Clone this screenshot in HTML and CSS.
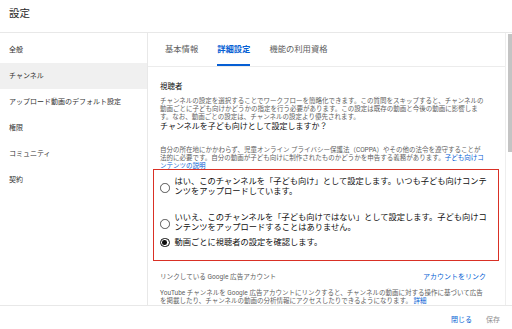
FILE: index.html
```html
<!DOCTYPE html>
<html lang="ja">
<head>
<meta charset="utf-8">
<title>設定</title>
<link rel="stylesheet" href="styles.css">
</head>
<body>
<div class="app">
  <header class="header">設定</header>
  <div class="body">
    <nav class="sidebar">
      <div class="nav-item">全般</div>
      <div class="nav-item active">チャンネル</div>
      <div class="nav-item">アップロード動画のデフォルト設定</div>
      <div class="nav-item">権限</div>
      <div class="nav-item">コミュニティ</div>
      <div class="nav-item">契約</div>
    </nav>
    <main class="main">
      <div class="panel">
        <div class="tabs">
          <div class="tab">基本情報</div>
          <div class="tab selected">詳細設定</div>
          <div class="tab">機能の利用資格</div>
        </div>
        <div class="content">
          <h2 class="section-title">視聴者</h2>
          <p class="desc">チャンネルの設定を選択することでワークフローを簡略化できます。この質問をスキップすると、チャンネルの動画ごとに子ども向けかどうかの指定を行う必要があります。この設定は既存の動画と今後の動画に影響します。なお、動画ごとの設定は、チャンネルの設定より優先されます。</p>
          <h3 class="question">チャンネルを子ども向けとして設定しますか？</h3>
          <p class="desc coppa">自分の所在地にかかわらず、児童オンライン プライバシー保護法（COPPA）やその他の法令を遵守することが法的に必要です。自分の動画が子ども向けに制作されたものかどうかを申告する義務があります。<span class="link">子ども向けコンテンツの説明</span></p>
          <div class="options">
            <div class="option opt1">
              <span class="radio"></span>
              <span class="option-text">はい、このチャンネルを「子ども向け」として設定します。いつも子ども向けコンテンツをアップロードしています。</span>
            </div>
            <div class="option opt2">
              <span class="radio"></span>
              <span class="option-text">いいえ、このチャンネルを「子ども向けではない」として設定します。子ども向けコンテンツをアップロードすることはありません。</span>
            </div>
            <div class="option opt3">
              <span class="radio checked"></span>
              <span class="option-text">動画ごとに視聴者の設定を確認します。</span>
            </div>
          </div>
          <div class="link-row">
            <span class="link-label">リンクしている Google 広告アカウント</span>
            <span class="link-action">アカウントをリンク</span>
          </div>
          <p class="desc yt">YouTube チャンネルを Google 広告アカウントにリンクすると、チャンネルの動画に対する操作に基づいて広告を掲載したり、チャンネルの動画の分析情報にアクセスしたりできるようになります。 <span class="link">詳細</span></p>
        </div>
      </div>
      <div class="scrollbar"><div class="thumb"></div></div>
    </main>
  </div>
  <footer class="footer">
    <span class="btn close">閉じる</span>
    <span class="btn save">保存</span>
  </footer>
</div>
</body>
</html>
```
FILE: styles.css
```css
* { box-sizing: border-box; }
html, body { margin: 0; padding: 0; background: #fff; }
body {
  font-family: Roboto, "Noto Sans CJK JP", sans-serif;
  color: #0f0f0f;
  width: 512px;
  height: 329px;
  overflow: hidden;
}
.app { display: flex; flex-direction: column; height: 329px; }
.header {
  height: 33px;
  border-bottom: 1px solid #e8e8e8;
  padding: 6px 0 0 9px;
  font-size: 10.5px;
  line-height: 16px;
  color: #282828;
}
.body { display: flex; height: 272px; }
.sidebar {
  width: 148px;
  border-right: 1px solid #e8e8e8;
  padding-top: 4px;
  flex: none;
}
.nav-item {
  height: 26px;
  line-height: 26px;
  padding-left: 9px;
  font-size: 7px;
  color: #333;
}
.nav-item.active { background: #f0f0f0; }
.main { flex: 1; display: flex; min-width: 0; }
.panel { flex: 1; display: flex; flex-direction: column; min-width: 0; }
.tabs {
  height: 34px;
  border-bottom: 1px solid #ececec;
  display: flex;
  gap: 19px;
  padding-left: 17px;
  flex: none;
}
.tab {
  font-size: 8.3px;
  line-height: 33px;
  color: #606060;
  position: relative;
}
.tab.selected { color: #065fd4; font-weight: 700; }
.tab.selected::after {
  content: "";
  position: absolute;
  left: 0; right: 0; bottom: 0;
  height: 2px;
  background: #065fd4;
}
.content {
  flex: 1;
  overflow: hidden;
  padding: 15px 17px 0 12px;
}
.section-title {
  margin: 0;
  font-size: 7.5px;
  line-height: 10px;
  font-weight: 400;
  color: #0f0f0f;
}
.desc {
  margin: 5px 0 0;
  font-size: 6.5px;
  line-height: 8px;
  color: #606060;
}
.question {
  margin: 0;
  font-size: 8px;
  line-height: 12px;
  font-weight: 400;
  color: #0f0f0f;
}
.desc.coppa { margin-top: 13px; max-width: 326.5px; }
.link { color: #065fd4; }
.options {
  position: relative;
  background: #fff;
  margin: -1.2px -11px 0 -7px;
  border: 1.5px solid #d93025;
  padding: 6.5px 0 12.5px 6px;
}
.option { display: flex; align-items: center; }
.opt1 { margin-bottom: 16px; }
.opt2 { margin-bottom: 5px; }
.radio {
  flex: none;
  width: 9.5px;
  height: 9.5px;
  border: 1.2px solid #555;
  border-radius: 50%;
  margin-top: 3px;
  margin-right: 5px;
  display: flex;
  align-items: center;
  justify-content: center;
}
.opt3 .radio { margin-top: 0; }
.radio.checked { border-color: #0f0f0f; }
.radio.checked::after {
  content: "";
  width: 4.6px;
  height: 4.6px;
  border-radius: 50%;
  background: #0f0f0f;
}
.option-text {
  width: 316px;
  font-size: 8.25px;
  line-height: 10px;
  color: #0f0f0f;
}
.link-row {
  margin-top: 10.7px;
  display: flex;
  justify-content: space-between;
  line-height: 10px;
}
.link-label { font-size: 6.6px; color: #606060; }
.link-action { font-size: 7px; color: #065fd4; padding-right: 2px; }
.desc.yt { margin-top: 7.6px; }
.scrollbar {
  width: 7px;
  flex: none;
  border-left: 1px solid #eeeeee;
  padding: 1px 0 0 2px;
}
.thumb { width: 4px; height: 118px; background: #c4c4c4; }
.footer {
  height: 24px;
  border-top: 1px solid #e8e8e8;
  display: flex;
  justify-content: flex-end;
  align-items: center;
  gap: 14px;
  padding: 3px 12px 0 0;
  font-size: 7px;
}
.btn.close { color: #065fd4; }
.btn.save { color: #909090; }
```
